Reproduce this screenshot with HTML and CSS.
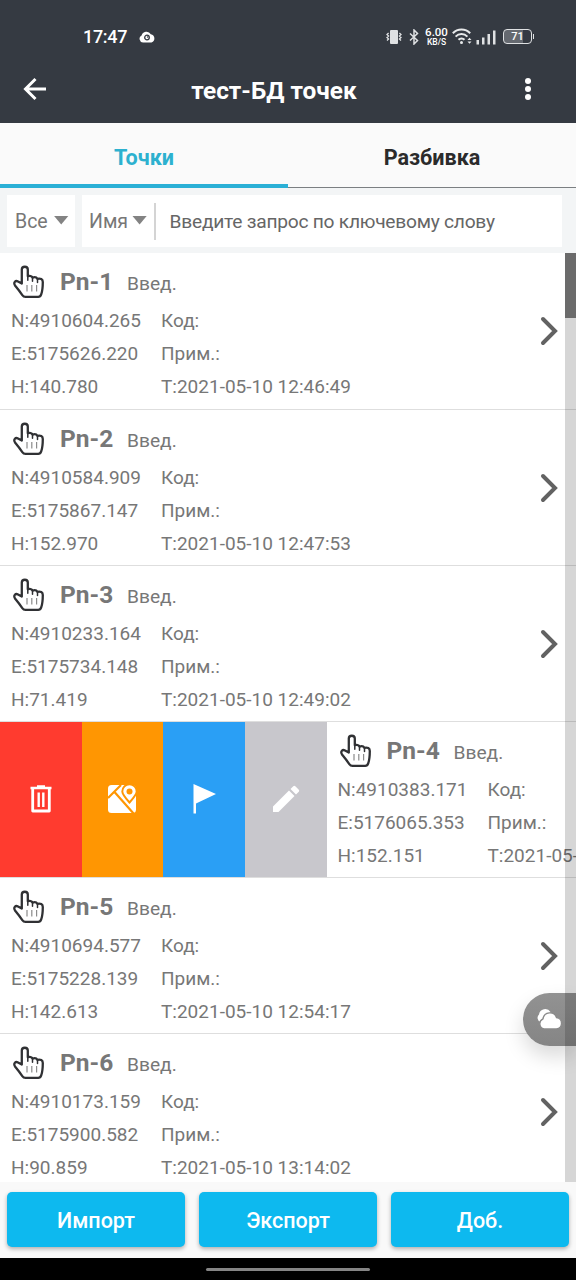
FILE: index.html
```html
<!DOCTYPE html>
<html lang="ru">
<head>
<meta charset="utf-8">
<title>тест-БД точек</title>
<link rel="stylesheet" href="styles.css">
</head>
<body>
<svg class="defs" width="0" height="0" aria-hidden="true">
  <symbol id="hand" viewBox="0 0 32 36">
    <path d="M8.800 19.500V5.500C8.800 1.800 14.800 1.800 14.800 5.500V12.200C16.500 11.600 18.800 12 19.500 13.600C21.500 12.700 23.600 13.400 24.500 14.800C27.500 14 29.800 15.400 29.800 17.900C29.800 23.400 29.400 26.900 28.200 30.400Q27.400 32.900 25.200 32.900H12.500Q10.500 32.900 9.300 31.200L6 26.500L2 21.500C.2 18.600 2.300 16 5 17.400Z" fill="#fff" stroke="#303134" stroke-width="2.300" stroke-linejoin="round"/>
    <path d="M14.800 12V16.200M19.500 13.500V17.200M24.500 15V18.400" stroke="#303134" stroke-width="1.500" stroke-linecap="round"/>
    <path d="M14 21V27.500M18.800 21V27.500M23.600 21V27.500" stroke="#8b8b8b" stroke-width="1.200"/>
  </symbol>
  <symbol id="chevron" viewBox="0 0 18 30"><path d="M3 3L15 15L3 27" fill="none" stroke="#626262" stroke-width="4" stroke-linecap="round" stroke-linejoin="miter"/></symbol>
</svg>
<div class="screen">
  <header class="appbar">
    <div class="status">
      <span class="clock">17:47</span>
      <svg class="cloud-eye" width="16" height="12" viewBox="0 0 16 12"><path d="M4 11.500A3.700 3.700 0 0 1 2.600 4.500A5 5 0 0 1 11.800 3.200A4.300 4.300 0 0 1 12.500 11.500Z" fill="#fff"/><circle cx="8" cy="6.500" r="2.300" fill="none" stroke="#353a42" stroke-width="1.300"/><circle cx="8.600" cy="6" r=".8" fill="#353a42"/></svg>
      <div class="indicators">
        <svg class="i-vibrate" width="16" height="16" viewBox="0 0 16 16"><rect x="4" y="1" width="8" height="14" rx="1" fill="#dfe1e3"/><path d="M2.600 4L1 5.500L2.600 7L1 8.500L2.600 10L1 11.500M13.400 4L15 5.500L13.400 7L15 8.500L13.400 10L15 11.500" fill="none" stroke="#dfe1e3" stroke-width="1.300"/></svg>
        <svg class="i-bt" width="12" height="16" viewBox="0 0 12 16"><path d="M2 4.500L9.500 11.500L6 15V1L9.500 4.500L2 11.500" fill="none" stroke="#dfe1e3" stroke-width="1.500"/></svg>
        <div class="speed"><b>6.00</b><span>KB/S</span></div>
        <svg class="i-wifi" width="20" height="17" viewBox="0 0 20 17"><g fill="none" stroke="#e8eaeb" stroke-width="2"><path d="M.8 5.200A12.200 12.200 0 0 1 18.200 5.200"/><path d="M3.600 8.600A8.200 8.200 0 0 1 15.400 8.600"/><path d="M6.500 11.700A4.200 4.200 0 0 1 12.500 11.700"/></g><circle cx="9.500" cy="14.500" r="1.500" fill="#e8eaeb"/><path d="M15.500 12L17.500 9.800L19.500 12ZM15.500 13.500L17.500 15.700L19.500 13.500Z" fill="#e8eaeb"/></svg>
        <svg class="i-signal" width="20" height="16" viewBox="0 0 20 16"><path d="M.5 11H3V15.500H.5ZM6 8.500H8.500V15.500H6ZM11.500 5H14V15.500H11.500ZM17 1.500H19.500V15.500H17Z" fill="#dfe1e3"/></svg>
        <div class="battery">71</div>
      </div>
    </div>
    <div class="titlebar">
      <svg width="24" height="24" viewBox="0 0 24 24"><path d="M12.500 2L2.500 12L12.500 22M2.500 12H23" fill="none" stroke="#fff" stroke-width="3"/></svg>
      <h1>тест-БД точек</h1>
      <svg width="8" height="24" viewBox="0 0 8 24" fill="#fff"><circle cx="4" cy="4" r="3"/><circle cx="4" cy="12" r="3"/><circle cx="4" cy="20" r="3"/></svg>
    </div>
  </header>
  <nav class="tabs"><div class="tab active">Точки</div><div class="tab">Разбивка</div></nav>
  <div class="filters">
    <div class="select">Все<i class="caret"></i></div>
    <div class="search"><span>Имя</span><i class="caret"></i><i class="sep"></i><span class="hint">Введите запрос по ключевому слову</span></div>
  </div>
  <main class="list">
    <div class="row"><article class="point"><div class="head"><svg class="hand"><use href="#hand"/></svg><b>Pn-1</b><span>Введ.</span></div><div class="data"><span>N:4910604.265</span><span>Код:</span><span>E:5175626.220</span><span>Прим.:</span><span>H:140.780</span><span>T:2021-05-10 12:46:49</span></div></article><svg class="chevron"><use href="#chevron"/></svg></div>
    <div class="row"><article class="point"><div class="head"><svg class="hand"><use href="#hand"/></svg><b>Pn-2</b><span>Введ.</span></div><div class="data"><span>N:4910584.909</span><span>Код:</span><span>E:5175867.147</span><span>Прим.:</span><span>H:152.970</span><span>T:2021-05-10 12:47:53</span></div></article><svg class="chevron"><use href="#chevron"/></svg></div>
    <div class="row"><article class="point"><div class="head"><svg class="hand"><use href="#hand"/></svg><b>Pn-3</b><span>Введ.</span></div><div class="data"><span>N:4910233.164</span><span>Код:</span><span>E:5175734.148</span><span>Прим.:</span><span>H:71.419</span><span>T:2021-05-10 12:49:02</span></div></article><svg class="chevron"><use href="#chevron"/></svg></div>
    <div class="row swiped">
      <div class="actions">
        <div class="action delete"><svg width="24" height="30" viewBox="0 0 24 30"><path d="M1.500 4H22.500M8 2.500H16" stroke="#fff" stroke-width="2.600"/><path d="M3.700 4V27H20.300V4" fill="none" stroke="#fff" stroke-width="2.800" stroke-linejoin="round"/><path d="M9.700 8.500V23M14.300 8.500V23" stroke="#fff" stroke-width="2.400"/></svg></div>
        <div class="action map"><svg width="30" height="30" viewBox="0 0 30 30"><rect x="1" y="1" width="28" height="28" rx="3.500" fill="#fff"/><path d="M1 14L14 1M7.500 8L27 30" fill="none" stroke="#ff9602" stroke-width="2.200"/><path d="M22.500 18.500C18 13.500 15.300 10.500 15.300 7.500A7.200 7.200 0 0 1 29.700 7.500C29.700 10.500 27 13.500 22.500 18.500Z" fill="#fff" stroke="#ff9602" stroke-width="2"/><circle cx="22.500" cy="7.500" r="3" fill="#ff9602"/></svg></div>
        <div class="action flag"><svg width="26" height="32" viewBox="0 0 26 32"><path d="M2.500 1L25 11L5 20.500V30.500H2.500Z" fill="#fff"/></svg></div>
        <div class="action edit"><svg width="28" height="28" viewBox="0 0 28 28"><path d="M1 21.500L17 5.500L22.500 11L6.500 27H1ZM18.500 4L21.300 1.200Q22.300.3 23.300 1.200L26.800 4.700Q27.700 5.700 26.800 6.700L24 9.500Z" fill="#fff"/></svg></div>
      </div>
      <article class="point"><div class="head"><svg class="hand"><use href="#hand"/></svg><b>Pn-4</b><span>Введ.</span></div><div class="data"><span>N:4910383.171</span><span>Код:</span><span>E:5176065.353</span><span>Прим.:</span><span>H:152.151</span><span>T:2021-05-</span></div></article>
    </div>
    <div class="row"><article class="point"><div class="head"><svg class="hand"><use href="#hand"/></svg><b>Pn-5</b><span>Введ.</span></div><div class="data"><span>N:4910694.577</span><span>Код:</span><span>E:5175228.139</span><span>Прим.:</span><span>H:142.613</span><span>T:2021-05-10 12:54:17</span></div></article><svg class="chevron"><use href="#chevron"/></svg></div>
    <div class="row"><article class="point"><div class="head"><svg class="hand"><use href="#hand"/></svg><b>Pn-6</b><span>Введ.</span></div><div class="data"><span>N:4910173.159</span><span>Код:</span><span>E:5175900.582</span><span>Прим.:</span><span>H:90.859</span><span>T:2021-05-10 13:14:02</span></div></article><svg class="chevron"><use href="#chevron"/></svg></div>
    <div class="cloud-button"><svg width="28" height="22" viewBox="0 0 28 22"><path d="M5.500 14A4.500 4.500 0 0 1 4 6.500A6.300 6.300 0 0 1 15.500 4L10 13Z" fill="#fff"/><path d="M9 21A5.400 5.400 0 0 1 8 10.800A7 7 0 0 1 21.500 9.500A5.800 5.800 0 0 1 21.500 21Z" fill="#fff" stroke="#8a8a8a" stroke-width="1.400"/></svg></div>
    <div class="scrollbar"><div class="thumb"></div></div>
  </main>
  <footer class="buttons"><button>Импорт</button><button>Экспорт</button><button>Доб.</button></footer>
  <div class="navbar"><i></i></div>
</div>
</body>
</html>
```

FILE: styles.css
```css
* { box-sizing: border-box; }
body { margin: 0; font-family: Roboto, "Liberation Sans", sans-serif; color: #777; }
.defs { position: absolute; }
.screen { width: 576px; height: 1280px; display: flex; flex-direction: column; overflow: hidden; background: #f9f9f9; }

.appbar { height: 123px; flex: none; background: #353a42; color: #fff; }
.status { height: 57px; padding: 16px 44px 0 83px; display: flex; align-items: center; }
.clock { width: 45px; font-size: 18px; font-weight: 500; letter-spacing: -.3px; }
.cloud-eye { margin-left: 11px; }
.indicators { margin-left: auto; display: flex; align-items: center; }
.i-bt { margin-left: 6px; }
.speed { width: 23px; margin-left: 5px; display: flex; flex-direction: column; align-items: center; font-weight: 500; }
.speed b { font-size: 11.500px; line-height: 11px; font-weight: 500; }
.speed span { font-size: 8.500px; line-height: 8px; }
.i-wifi { margin-left: 4px; }
.i-signal { margin-left: 4px; }
.battery { position: relative; width: 29px; height: 15px; margin-left: 7px; border: 1.500px solid #dfe1e3; border-radius: 4px; font-size: 11px; line-height: 13px; font-weight: 500; text-align: center; background: linear-gradient(90deg, #656970 70%, transparent 70%); }
.battery::after { content: ""; position: absolute; right: -3px; top: 4px; width: 1px; height: 5px; background: #dfe1e3; }
.titlebar { height: 66px; padding: 0 44px 2px 23px; display: flex; align-items: center; }
.titlebar h1 { flex: 1; margin: 3px 0 0; font-size: 24.400px; font-weight: 700; line-height: 30px; text-align: center; text-indent: -23px; }

.tabs { height: 65px; flex: none; display: flex; background: #fafafa; }
.tab { flex: 1; border-bottom: 1px solid #7b7f82; color: #2b2b2b; font-size: 21.600px; font-weight: 700; line-height: 69px; text-align: center; }
.tab.active { color: #2db1cf; border-bottom: 4px solid #2bb0d6; }

.filters { height: 65px; flex: none; padding: 7px 14px 6px 7px; display: flex; gap: 7px; background: #f3f5f6; font-size: 19.500px; line-height: 54px; }
.select, .search { display: flex; align-items: center; background: #fff; height: 52px; padding-top: 2px; }
.select { width: 68px; padding-left: 8px; }
.search { flex: 1; padding-left: 7px; }
.caret { width: 15px; height: 9px; margin: -4px 0 0 6px; background: #838383; clip-path: polygon(0 0, 100% 0, 50% 100%); }
.search .caret { margin-left: 4px; }
.sep { width: 1.500px; height: 37px; margin: -2px 14px 0 7px; background: #d4d4d4; }
.hint { color: #666; font-size: 19.200px; letter-spacing: -.25px; white-space: nowrap; }

.list { position: relative; height: 929px; flex: none; overflow: hidden; background: #fff; }
.row { height: 156.200px; display: flex; border-bottom: 1px solid #dedede; }
.row:first-child { height: 156.500px; }
.point { flex: 1; padding: 8px 0 0 11px; }
.head { height: 43px; line-height: 41px; display: flex; align-items: baseline; }
.hand { width: 32px; height: 36px; margin-left: 2px; align-self: flex-start; margin-top: 3px; }
.head b { width: 66px; margin-left: 15px; font-size: 24.500px; }
.head span { margin-left: 1px; font-size: 19.200px; }
.data { display: grid; grid-template-columns: 150px 1fr; line-height: 33px; font-size: 19px; white-space: nowrap; }
.chevron { width: 18px; height: 30px; margin: 63px 18px 0 0; flex: none; }
.swiped .point { flex: none; width: 250px; }
.actions { width: 326.500px; flex: none; display: flex; }
.action { flex: 1; display: flex; align-items: center; justify-content: center; }
.delete { background: #ff3b2f; }
.map { background: #ff9602; }
.flag { background: #2a9ff5; }
.edit { background: #c8c7cc; }
.scrollbar { position: absolute; top: 0; right: 0; width: 11px; height: 100%; background: rgba(0, 0, 0, .16); }
.thumb { height: 65px; background: #6b6b6b; }
.cloud-button { position: absolute; top: 740px; right: 0; width: 53px; height: 53px; padding: 15px 0 0 12px; border-radius: 27px 0 0 27px; background: linear-gradient(#929292, #858585); box-shadow: 0 10px 20px rgba(0, 0, 0, .15); }

.buttons { height: 76px; flex: none; padding: 10px 7px 11px; display: flex; gap: 14px; background: #f9f9f9; }
.buttons button { flex: 1; padding: 2px 0 0; border: 0; border-radius: 5px; background: #0db9ef; box-shadow: 0 2px 4px rgba(0, 0, 0, .3); color: #fff; font: 500 21.500px Roboto, sans-serif; }
.navbar { height: 22px; flex: none; display: flex; align-items: center; justify-content: center; background: #000; }
.navbar i { width: 164px; height: 3px; border-radius: 2px; background: #858585; }
```
